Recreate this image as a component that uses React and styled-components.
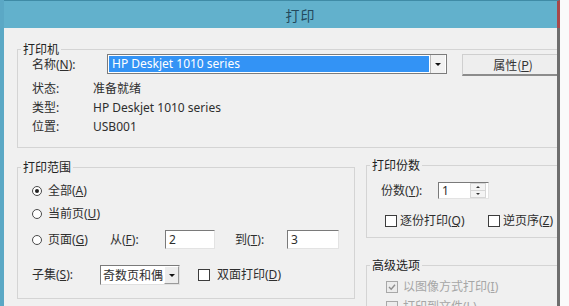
import React from 'react';
import styled, { createGlobalStyle } from 'styled-components';

const GlobalStyle = createGlobalStyle`
  html, body {
    margin: 0;
    padding: 0;
    background: #fafafa;
  }
  body {
    font-family: "Noto Sans", "Noto Sans CJK SC", sans-serif;
    font-size: 12px;
    color: #2e2e2e;
  }
  #root {
    height: 306px;
    overflow: hidden;
  }
`;

const Window = styled.div`
  width: 560px;
  height: 306px;
  box-sizing: border-box;
  display: flex;
  flex-direction: column;
  border-left: 4px solid #5ba8c5;
`;

const TitleBar = styled.div`
  height: 28px;
  flex: none;
  box-sizing: border-box;
  background: #62b1cc;
  border-top: 1px solid #3f8ba6;
  border-right: 3px solid #a8484a;
  display: flex;
  align-items: center;
  justify-content: center;
  padding-left: 40px;
  font-family: "Noto Sans CJK SC", sans-serif;
  font-size: 14px;
  color: #23495c;
  letter-spacing: 1px;
`;

const Body = styled.div`
  flex: 1;
  background: #f0f0f0;
  border-right: 3px solid #6e6e6e;
  padding: 14px 0 0 13px;
  overflow: hidden;
`;

const Group = styled.fieldset`
  margin: ${p => p.$mt || 0}px ${p => (p.$open ? -4 : 0)}px 0 0;
  padding: 0;
  min-width: 0;
  border: 1px solid #d4d4d4;
  ${p => p.$w && `width: ${p.$w}px; flex: none; box-sizing: border-box;`}
`;

const Legend = styled.legend`
  margin-left: 3px;
  padding: 0 2px;
  line-height: 14px;
  font-family: "Noto Sans CJK SC", sans-serif;
  font-size: 12px;
  color: #222;
`;

const GroupBody = styled.div`
  padding: ${p => p.$pt || 0}px 0 ${p => p.$pb || 0}px ${p => p.$pl ?? 14}px;
`;

const Row = styled.div`
  display: flex;
  align-items: center;
  height: ${p => p.$h || 18}px;
  margin-top: ${p => p.$mt || 0}px;
  padding-left: ${p => p.$pl || 0}px;
  line-height: 18px;
  white-space: nowrap;
`;

const FieldLabel = styled.span`
  width: ${p => p.$w}px;
  flex: none;
  margin-left: ${p => p.$ml || 0}px;
`;

const U = styled.span`
  text-decoration: underline;
`;

const PrinterSelect = styled.div`
  width: 340px;
  height: 20px;
  box-sizing: border-box;
  flex: none;
  display: flex;
  align-self: flex-start;
  border: 1px solid #7c7c7c;
  background: #fff;
`;

const SelectedText = styled.div`
  flex: 1;
  margin: 1px;
  background: #3393f5;
  color: #fff;
  padding-left: 3px;
  line-height: 16px;
`;

const DropArrow = styled.div`
  width: 16px;
  flex: none;
  box-sizing: border-box;
  display: flex;
  align-items: center;
  justify-content: center;
  background: #f2f2f2;
  border-left: 1px solid #b8b8b8;
  border-right: 1px solid #fff;
  &::after {
    content: "";
    border-left: 3px solid transparent;
    border-right: 3px solid transparent;
    border-top: 3px solid #111;
  }
`;

const Button = styled.div`
  width: 102px;
  height: 22px;
  flex: none;
  box-sizing: border-box;
  margin-left: 15px;
  align-self: flex-start;
  display: flex;
  align-items: center;
  justify-content: center;
  background: #eeeeee;
  border: 1px solid #cfcfcf;
  border-bottom: 2px solid #8c8c8c;
  font-family: "Noto Sans CJK SC", sans-serif;
  color: #333;
`;

const Columns = styled.div`
  display: flex;
  align-items: flex-start;
  margin-top: 12px;
`;

const RightColumn = styled.div`
  flex: 1;
  margin: -2px -4px 0 11px;
`;

const Option = styled.span`
  display: flex;
  align-items: center;
  width: ${p => (p.$w ? `${p.$w}px` : 'auto')};
  flex: none;
  margin-left: ${p => p.$ml || 0}px;
  color: ${p => (p.$disabled ? '#a6a6a6' : 'inherit')};
`;

const Radio = styled.span`
  width: 10px;
  height: 10px;
  box-sizing: border-box;
  border-radius: 50%;
  border: 1px solid #4a4a4a;
  background: #fff;
  margin-right: 6px;
  display: flex;
  align-items: center;
  justify-content: center;
  &::after {
    content: "";
    width: 4px;
    height: 4px;
    border-radius: 50%;
    background: ${p => (p.$checked ? '#222' : 'transparent')};
  }
`;

const Check = styled.span`
  width: 12px;
  height: 12px;
  box-sizing: border-box;
  border: 1px solid ${p => (p.$disabled ? '#a8a8a8' : '#3c3c3c')};
  background: ${p => (p.$disabled ? '#ececec' : '#fff')};
  margin-right: ${p => p.$mr || 4}px;
  display: flex;
  align-items: center;
  justify-content: center;
  flex: none;
`;

const TextBox = styled.div`
  width: ${p => p.$w}px;
  height: ${p => p.$h || 19}px;
  box-sizing: border-box;
  flex: none;
  display: flex;
  align-items: center;
  background: #fff;
  border: 1px solid #e3e3e3;
  border-top-color: #7a7a7a;
  border-left-color: #7a7a7a;
  padding-left: 3px;
  font-size: 12px;
`;

const SubsetSelect = styled.div`
  width: 80px;
  height: 20px;
  box-sizing: border-box;
  flex: none;
  display: flex;
  background: #fff;
  border: 1px solid #e0e0e0;
  border-top-color: #7a7a7a;
  border-left-color: #7a7a7a;
  font-family: "Noto Sans CJK SC", sans-serif;
`;

const SubsetText = styled.div`
  flex: 1;
  padding-left: 2px;
  line-height: 18px;
  overflow: hidden;
`;

const SubsetArrow = styled(DropArrow)`
  width: 15px;
  border: 1px solid #9a9a9a;
  border-top-color: #fff;
  border-left-color: #fff;
  background: #ededed;
`;

const Spinner = styled(TextBox)`
  padding-right: 2px;
  justify-content: space-between;
`;

const SpinButtons = styled.div`
  width: 14px;
  height: 13px;
  display: flex;
  flex-direction: column;
  border: 1px solid #d6d6d6;
  background: #f4f4f4;
`;

const SpinHalf = styled.div`
  flex: 1;
  display: flex;
  align-items: center;
  justify-content: center;
  &::after {
    content: "";
    border-left: 2px solid transparent;
    border-right: 2px solid transparent;
    ${p => (p.$up ? 'border-bottom: 2px solid #333;' : 'border-top: 2px solid #333;')}
  }
  & + & {
    border-top: 1px solid #d6d6d6;
  }
`;

const Tick = ({ color }) => (
  <svg width="8" height="8" viewBox="0 0 8 8">
    <path d="M1 4 L3.2 6.2 L7 1.8" fill="none" stroke={color} strokeWidth="1.4" />
  </svg>
);

export default function App() {
  return (
    <>
      <GlobalStyle />
      <Window>
        <TitleBar>打印</TitleBar>
        <Body>
          <Group $open>
            <Legend>打印机</Legend>
            <GroupBody $pb={11}>
              <Row $h={22} $mt={-2}>
                <FieldLabel $w={75}>名称(<U>N</U>):</FieldLabel>
                <PrinterSelect>
                  <SelectedText>HP Deskjet 1010 series</SelectedText>
                  <DropArrow />
                </PrinterSelect>
                <Button>属性(<U>P</U>)</Button>
              </Row>
              <Row $h={19} $mt={3}>
                <FieldLabel $w={61}>状态:</FieldLabel>
                <span>准备就绪</span>
              </Row>
              <Row $h={19}>
                <FieldLabel $w={61}>类型:</FieldLabel>
                <span>HP Deskjet 1010 series</span>
              </Row>
              <Row $h={19}>
                <FieldLabel $w={61}>位置:</FieldLabel>
                <span>USB001</span>
              </Row>
            </GroupBody>
          </Group>

          <Columns>
            <Group $w={338}>
              <Legend>打印范围</Legend>
              <GroupBody $pt={8} $pb={13}>
                <Row>
                  <Option>
                    <Radio $checked />
                    全部(<U>A</U>)
                  </Option>
                </Row>
                <Row $mt={5}>
                  <Option>
                    <Radio />
                    当前页(<U>U</U>)
                  </Option>
                </Row>
                <Row $h={19} $mt={7}>
                  <Option $w={78}>
                    <Radio />
                    页面(<U>G</U>)
                  </Option>
                  <FieldLabel $w={55}>从(<U>F</U>):</FieldLabel>
                  <TextBox $w={50}>2</TextBox>
                  <FieldLabel $w={52} $ml={20}>到(<U>T</U>):</FieldLabel>
                  <TextBox $w={52}>3</TextBox>
                </Row>
                <Row $h={20} $mt={16}>
                  <FieldLabel $w={68}>子集(<U>S</U>):</FieldLabel>
                  <SubsetSelect>
                    <SubsetText>奇数页和偶</SubsetText>
                    <SubsetArrow />
                  </SubsetSelect>
                  <Option $ml={18}>
                    <Check $mr={7} />
                    双面打印(<U>D</U>)
                  </Option>
                </Row>
              </GroupBody>
            </Group>

            <RightColumn>
              <Group>
                <Legend>打印份数</Legend>
                <GroupBody $pt={10} $pb={7}>
                  <Row $h={17}>
                    <FieldLabel $w={57}>份数(<U>Y</U>):</FieldLabel>
                    <Spinner $w={51} $h={17}>
                      1
                      <SpinButtons>
                        <SpinHalf $up />
                        <SpinHalf />
                      </SpinButtons>
                    </Spinner>
                  </Row>
                  <Row $mt={13} $pl={4}>
                    <Option $w={103}>
                      <Check $mr={3} />
                      逐份打印(<U>Q</U>)
                    </Option>
                    <Option>
                      <Check $mr={3} />
                      逆页序(<U>Z</U>)
                    </Option>
                  </Row>
                </GroupBody>
              </Group>

              <Group $mt={20}>
                <Legend>高级选项</Legend>
                <GroupBody $pt={6}>
                  <Row $pl={5}>
                    <Option $disabled>
                      <Check $disabled $mr={5}>
                        <Tick color="#8e8e8e" />
                      </Check>
                      以图像方式打印(<U>I</U>)
                    </Option>
                  </Row>
                  <Row $mt={2} $pl={5}>
                    <Option $disabled>
                      <Check $disabled $mr={5} />
                      打印到文件(<U>L</U>)
                    </Option>
                  </Row>
                </GroupBody>
              </Group>
            </RightColumn>
          </Columns>
        </Body>
      </Window>
    </>
  );
}
